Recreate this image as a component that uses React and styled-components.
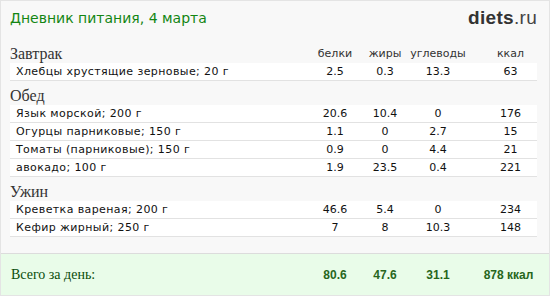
import React from 'react';
import styled, { createGlobalStyle } from 'styled-components';

const meals = [
  {
    title: 'Завтрак',
    items: [['Хлебцы хрустящие зерновые; 20 г', '2.5', '0.3', '13.3', '63']],
  },
  {
    title: 'Обед',
    items: [
      ['Язык морской; 200 г', '20.6', '10.4', '0', '176'],
      ['Огурцы парниковые; 150 г', '1.1', '0', '2.7', '15'],
      ['Томаты (парниковые); 150 г', '0.9', '0', '4.4', '21'],
      ['авокадо; 100 г', '1.9', '23.5', '0.4', '221'],
    ],
  },
  {
    title: 'Ужин',
    items: [
      ['Креветка вареная; 200 г', '46.6', '5.4', '0', '234'],
      ['Кефир жирный; 250 г', '7', '8', '10.3', '148'],
    ],
  },
];

const totals = ['80.6', '47.6', '31.1', '878 ккал'];

const App = () => {
  return (
    <>
      <GlobalStyle />
      <Card>
        <Header>
          <Title>Дневник питания, 4 марта</Title>
          <Logo>
            <b>diets</b>.ru
          </Logo>
        </Header>
        <Body>
          {meals.map((meal, i) => (
            <section key={meal.title}>
              <MealHead>
                <MealTitle>{meal.title}</MealTitle>
                {i === 0 && (
                  <>
                    <ColHead>белки</ColHead>
                    <ColHead>жиры</ColHead>
                    <ColHead>углеводы</ColHead>
                    <ColHead $last>ккал</ColHead>
                  </>
                )}
              </MealHead>
              {meal.items.map(([name, ...vals]) => (
                <Row key={name}>
                  <Name>{name}</Name>
                  {vals.map((v, j) => (
                    <Cell key={j} $last={j === 3}>
                      {v}
                    </Cell>
                  ))}
                </Row>
              ))}
            </section>
          ))}
        </Body>
        <Total>
          <TotalLabel>Всего за день:</TotalLabel>
          {totals.map((v, j) => (
            <TotalCell key={j} $last={j === 3}>
              {v}
            </TotalCell>
          ))}
        </Total>
      </Card>
    </>
  );
};

export default App;

//Styles

const GlobalStyle = createGlobalStyle`
  body {
    margin: 0;
    font-family: "DejaVu Sans", Verdana, sans-serif;
  }
`;

const Card = styled.div`
  box-sizing: border-box;
  width: 550px;
  height: 296px;
  display: flex;
  flex-direction: column;
  background: #f8f8f8;
  border: 1px solid #e4e4e4;
`;

const Header = styled.div`
  display: flex;
  justify-content: space-between;
  align-items: flex-start;
  height: 38px;
  padding: 7px 12px 0 9px;
  box-sizing: border-box;
`;

const Title = styled.div`
  font-size: 14px;
  line-height: 20px;
  color: #138613;
`;

const Logo = styled.div`
  font-family: "Liberation Sans", Arial, sans-serif;
  font-size: 19px;
  line-height: 22px;
  margin-top: -1px;
  color: #444;
  letter-spacing: 0.3px;

  b {
    color: #333;
    font-weight: bold;
  }
`;

const Body = styled.div`
  flex: 1;
  padding: 0 12px 0 9px;
  border-bottom: 1px solid #dcdcdc;
`;

const grid = `
  display: grid;
  grid-template-columns: 1fr 50px 50px 56px 71px;
`;

const MealHead = styled.div`
  ${grid};
  height: 24px;
  align-items: end;
  padding-bottom: 1px;
  box-sizing: border-box;
`;

const MealTitle = styled.div`
  font-family: "Liberation Serif", "Times New Roman", serif;
  font-size: 16px;
  line-height: 17px;
  color: #333;
`;

const ColHead = styled.div`
  font-size: 11px;
  line-height: 14px;
  color: #333;
  text-align: center;
  padding-bottom: 1px;
  padding-left: ${(p) => (p.$last ? '18px' : '0')};
`;

const Row = styled.div`
  ${grid};
  height: 18px;
  box-sizing: border-box;
  align-items: center;
  background: #fff;
  border-bottom: 1px solid #e2e2e2;
  font-size: 11px;
  color: #111;
`;

const Name = styled.div`
  padding-left: 6px;
  letter-spacing: 0.4px;
`;

const Cell = styled.div`
  text-align: center;
  padding-left: ${(p) => (p.$last ? '18px' : '0')};
`;

const Total = styled.div`
  ${grid};
  height: 41px;
  padding: 0 12px 0 9px;
  align-items: center;
  background: #e9fce9;
`;

const TotalLabel = styled.div`
  font-family: "Liberation Serif", "Times New Roman", serif;
  font-size: 14px;
  color: #0a4d0a;
  padding-left: 1px;
`;

const TotalCell = styled.div`
  font-family: "Liberation Sans", Arial, sans-serif;
  font-weight: bold;
  font-size: 12px;
  color: #27661c;
  text-align: center;
  padding-left: ${(p) => (p.$last ? '14px' : '0')};
`;
